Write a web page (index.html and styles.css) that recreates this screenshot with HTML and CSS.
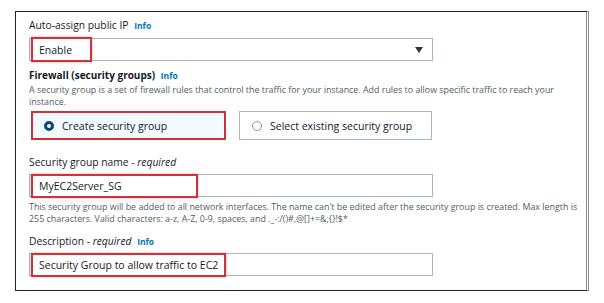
FILE: index.html
```html
<!DOCTYPE html>
<html lang="en">
<head>
  <meta charset="UTF-8" />
  <meta name="viewport" content="width=device-width, initial-scale=1.0" />
  <title>Network settings</title>
  <link rel="stylesheet" href="styles.css">
</head>
<body>

  <div class="frame">
    <div class="field ip">
      <div class="label">Auto-assign public IP <a class="info">Info</a></div>
      <div class="select">
        <span class="mark">Enable</span>
        <span class="caret"></span>
      </div>
    </div>

    <div class="field firewall">
      <div class="label strong">Firewall (security groups) <a class="info">Info</a></div>
      <p class="help">A security group is a set of firewall rules that control the traffic for your instance. Add rules to allow specific traffic to reach your instance.</p>
      <div class="tiles">
        <div class="tile picked"><span class="radio on"></span>Create security group</div>
        <div class="tile"><span class="radio"></span>Select existing security group</div>
      </div>
    </div>

    <div class="field sg-name">
      <div class="label">Security group name - <em>required</em></div>
      <div class="input"><span class="mark name-mark">MyEC2Server_SG</span></div>
      <p class="help">This security group will be added to all network interfaces. The name can't be edited after the security group is created. Max length is 255 characters. Valid characters: a-z, A-Z, 0-9, spaces, and ._-:/()#,@[]+=&amp;;{}!$*</p>
    </div>

    <div class="field desc">
      <div class="label">Description - <em>required</em> <a class="info">Info</a></div>
      <div class="input"><span class="mark">Security Group to allow traffic to EC2</span></div>
    </div>

    <div class="field">
      <div class="label strong">Inbound security group rules</div>
    </div>
  </div>

</body>
</html>
```
FILE: styles.css
```css
:root { --ink: #16191f; --muted: #545b64; --line: #aab7b8; --blue: #0073bb; --red: #d13239; }
* { box-sizing: border-box; font-family: 'Open Sans', sans-serif; }
body { margin: 0; background: #fff; color: var(--ink); }
.frame { margin: 11px 0 0 15px; width: 574px; height: 280px; border: 1px solid #222; border-right: 3px double #8d8d8d; padding: 6px 0 0 13px; overflow: hidden; }
.label { font-size: 10.3px; line-height: 14px; margin-bottom: 5px; }
.label.strong { font-weight: 700; font-size: 10px; margin-bottom: 1px; }
.label em { font-style: italic; }
.info { color: var(--blue); font-weight: 700; font-size: 8.5px; margin-left: 3px; }
.help { margin: 0; font-size: 8.9px; line-height: 12px; color: var(--muted); width: 556px; }
.select, .input { width: 404px; height: 23px; border: 1px solid var(--line); display: flex; align-items: center; justify-content: space-between; font-size: 10.5px; }
.mark { align-self: stretch; display: flex; align-items: center; padding: 0 6px; border: 2px solid var(--red); margin: -1px 0 -2px 1px; box-shadow: 0 0 2px rgba(209, 50, 57, 0.5); }
.select .mark { width: 61px; margin-top: -2px; }
.input .mark { justify-content: flex-start; }
.name-mark { width: 167px; }
.caret { width: 0; height: 0; border-left: 4px solid transparent; border-right: 4px solid transparent; border-top: 6px solid #333; margin-right: 9px; }
.ip { margin-bottom: 7px; }
.firewall { margin-bottom: 15px; }
.sg-name { margin-bottom: 9px; }
.sg-name .help { margin-top: 4px; }
.desc { margin-bottom: 12px; }
.desc .label { margin-bottom: 4px; }
.tiles { display: flex; gap: 13px; margin-top: 3px; margin-left: 2px; }
.tile { height: 29px; border: 1px solid var(--line); display: flex; align-items: center; padding-left: 12px; font-size: 10.5px; width: 193px; }
.tile.picked { border: 2px solid var(--red); background: #f1faff; width: 195px; padding-left: 11px; }
.radio { width: 10px; height: 10px; border-radius: 50%; border: 1px solid #879596; margin-right: 8px; }
.radio.on { border: 3px solid #0a4a74; }
```
